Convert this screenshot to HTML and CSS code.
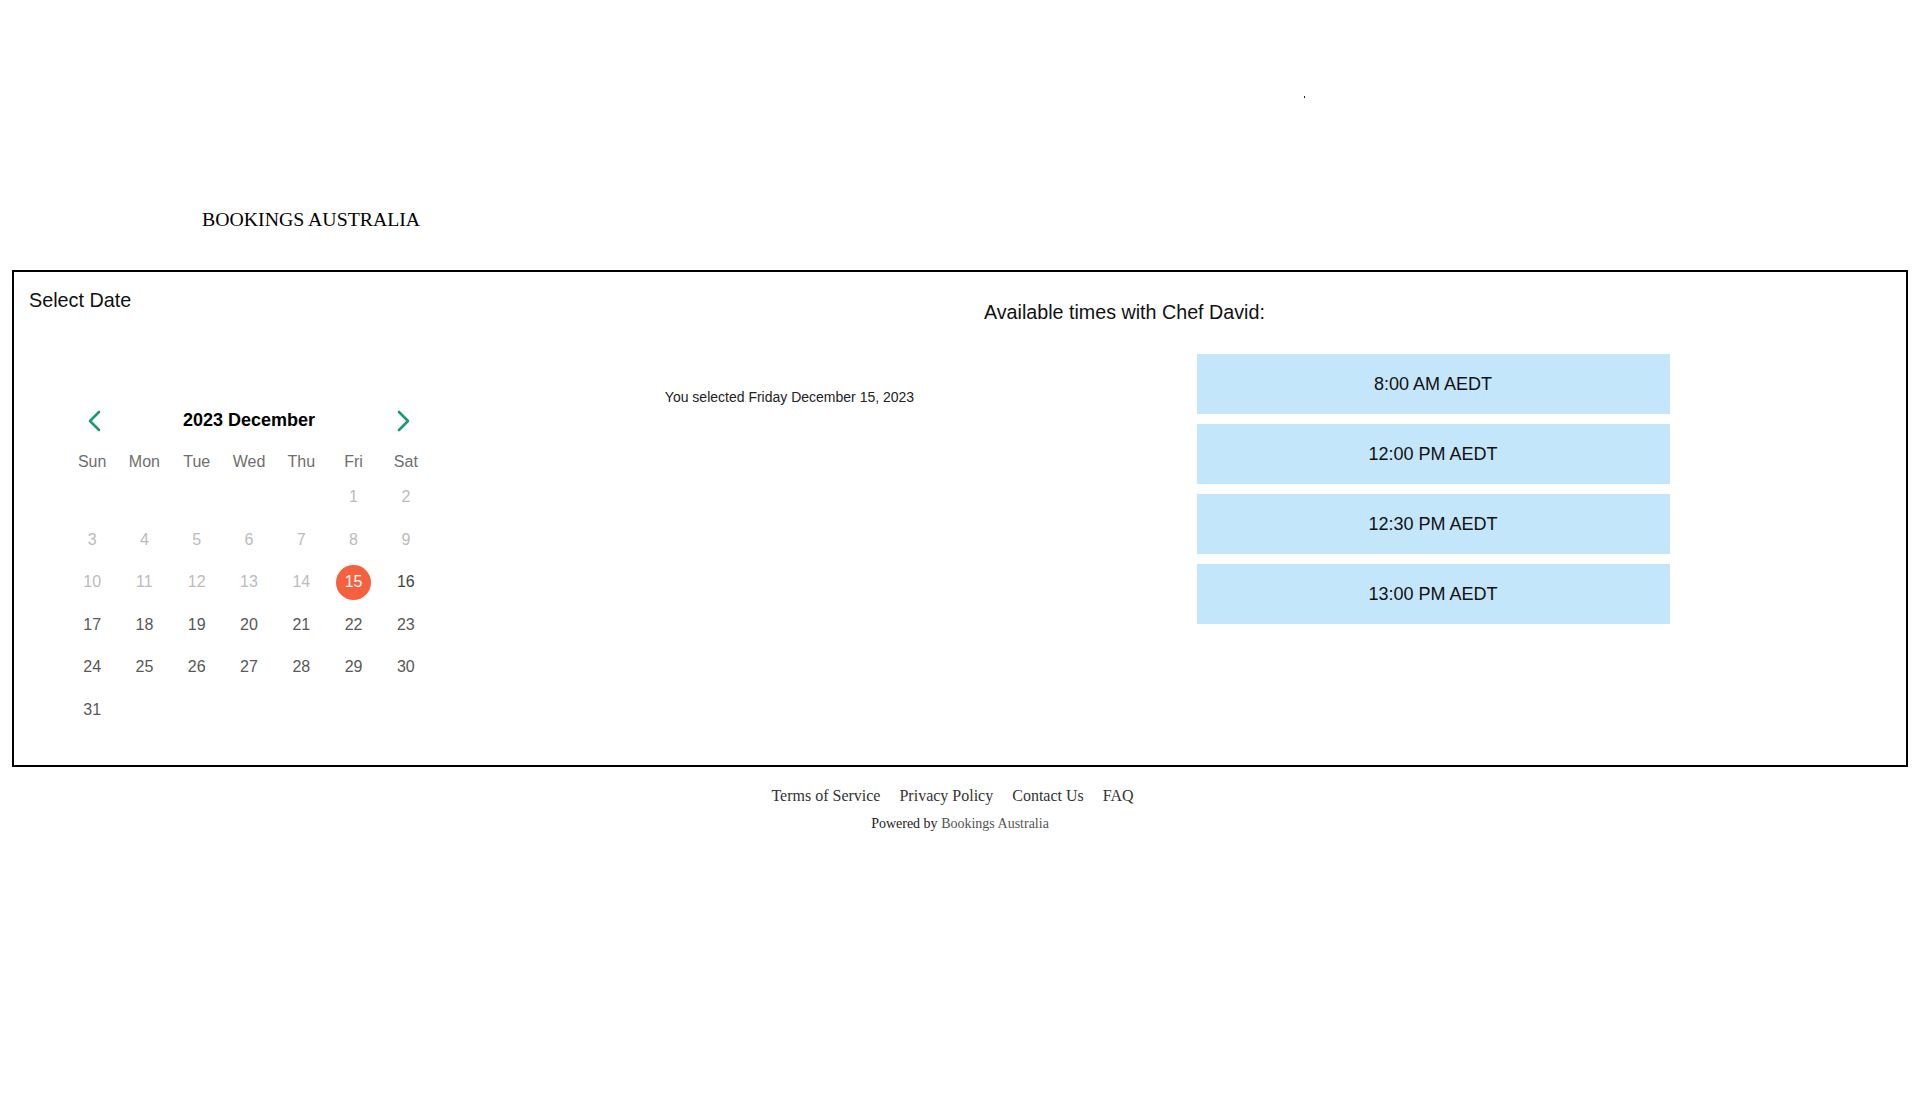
FILE: index.html
```html
<!DOCTYPE html>
<html lang="en">
<head>
<meta charset="utf-8">
<title>Bookings Australia</title>
<link rel="stylesheet" href="styles.css">
</head>
<body>
<div class="top"><span class="dot"></span></div>
<div class="brand">BOOKINGS AUSTRALIA</div>

<main class="box">
  <section class="left">
    <h2 class="title">Select Date</h2>
    <div class="row">
      <div class="cal-wrap">
        <div class="cal">
          <div class="cal-head">
            <svg class="chev" viewBox="0 0 14 22" width="14" height="22"><polyline points="12,2 3,11 12,20" /></svg>
            <span class="month">2023 December</span>
            <svg class="chev" viewBox="0 0 14 22" width="14" height="22"><polyline points="2,2 11,11 2,20" /></svg>
          </div>
          <div class="grid weekdays">
            <span>Sun</span><span>Mon</span><span>Tue</span><span>Wed</span><span>Thu</span><span>Fri</span><span>Sat</span>
          </div>
          <div class="grid days">
            <span></span><span></span><span></span><span></span><span></span>
            <span class="off">1</span><span class="off">2</span>
            <span class="off">3</span><span class="off">4</span><span class="off">5</span><span class="off">6</span><span class="off">7</span><span class="off">8</span><span class="off">9</span>
            <span class="off">10</span><span class="off">11</span><span class="off">12</span><span class="off">13</span><span class="off">14</span><span class="sel"><b>15</b></span><span class="on">16</span>
            <span>17</span><span>18</span><span>19</span><span>20</span><span>21</span><span>22</span><span>23</span>
            <span>24</span><span>25</span><span>26</span><span>27</span><span>28</span><span>29</span><span>30</span>
            <span>31</span>
          </div>
        </div>
      </div>
      <p class="selected">You selected Friday December 15, 2023</p>
    </div>
  </section>
  <section class="right">
    <h2 class="avail">Available times with Chef David:</h2>
    <div class="slots">
      <button class="slot">8:00 AM AEDT</button>
      <button class="slot">12:00 PM AEDT</button>
      <button class="slot">12:30 PM AEDT</button>
      <button class="slot">13:00 PM AEDT</button>
    </div>
  </section>
</main>

<footer class="footer">
  <nav class="links">
    <a href="#">Terms of Service</a>
    <a href="#">Privacy Policy</a>
    <a href="#">Contact Us</a>
    <a href="#">FAQ</a>
  </nav>
  <p class="powered">Powered by <a href="#">Bookings Australia</a></p>
</footer>
</body>
</html>
```

FILE: styles.css
```css
html, body {
  margin: 0;
  padding: 0;
  background: #fff;
}
body {
  font-family: "Liberation Serif", "Times New Roman", serif;
  color: #000;
}
.top {
  height: 208px;
  overflow: hidden;
}
.dot {
  display: block;
  width: 1px;
  height: 2px;
  background: #222;
  margin: 96px 0 0 1304px;
}
.brand {
  padding-left: 202px;
  font-size: 19.8px;
  line-height: 23px;
  color: #000;
}
.box {
  margin: 39px 12px 0;
  border: 2px solid #000;
  display: grid;
  grid-template-columns: 1fr 1fr;
  font-family: "Liberation Sans", Arial, sans-serif;
}
.left {
  padding: 17px 15px 34px;
}
.title {
  margin: 0;
  font-size: 19.8px;
  line-height: 23px;
  font-weight: normal;
  color: #111;
}
.row {
  display: flex;
  align-items: flex-start;
  margin-top: 77px;
}
.cal-wrap {
  width: 605px;
  padding-left: 37px;
  padding-top: 11.5px;
  box-sizing: border-box;
}
.cal {
  width: 366px;
}
.cal-head {
  height: 40px;
  display: flex;
  align-items: center;
  justify-content: space-between;
  padding: 0 21px;
}
.chev {
  display: block;
  fill: none;
  stroke: #1a9a74;
  stroke-width: 2.6;
  stroke-linecap: round;
  stroke-linejoin: round;
}
.month {
  font-size: 18px;
  font-weight: bold;
  color: #000;
}
.grid {
  display: grid;
  grid-template-columns: repeat(7, 1fr);
  text-align: center;
}
.weekdays {
  margin-top: 8px;
  height: 27.5px;
  align-items: center;
  font-size: 16px;
  color: #6e6e6e;
}
.days {
  grid-auto-rows: 42.5px;
  font-size: 16px;
  color: #585858;
}
.days span {
  display: flex;
  align-items: center;
  justify-content: center;
}
.days .off {
  color: #bcbcbc;
}
.days .on {
  color: #444;
}
.days .sel b {
  display: flex;
  align-items: center;
  justify-content: center;
  width: 35px;
  height: 35px;
  border-radius: 50%;
  background: #f6603e;
  color: #fff;
  font-weight: normal;
}
.selected {
  flex: 1;
  margin: 0;
  text-align: center;
  font-size: 14px;
  line-height: 16px;
  color: #222;
}
.right {
  padding: 29px 0 0 24px;
}
.avail {
  margin: 0;
  font-size: 19.7px;
  line-height: 23px;
  font-weight: normal;
  color: #111;
}
.slots {
  display: flex;
  flex-direction: column;
  gap: 10px;
  margin-top: 30px;
  margin-left: 212.5px;
  width: 473px;
}
.slot {
  height: 60px;
  border: 0;
  padding: 0;
  background: #c3e6fb;
  font-family: "Liberation Sans", Arial, sans-serif;
  font-size: 18px;
  color: #111;
  cursor: pointer;
}
.footer {
  margin-top: 20px;
  text-align: center;
}
.links {
  font-size: 16px;
  line-height: 18px;
}
.links a {
  color: #333;
  text-decoration: none;
  margin-right: 15px;
}
.powered {
  margin: 11px 0 0;
  font-size: 14px;
  line-height: 16px;
  color: #222;
}
.powered a {
  color: #555;
  text-decoration: none;
}
```
